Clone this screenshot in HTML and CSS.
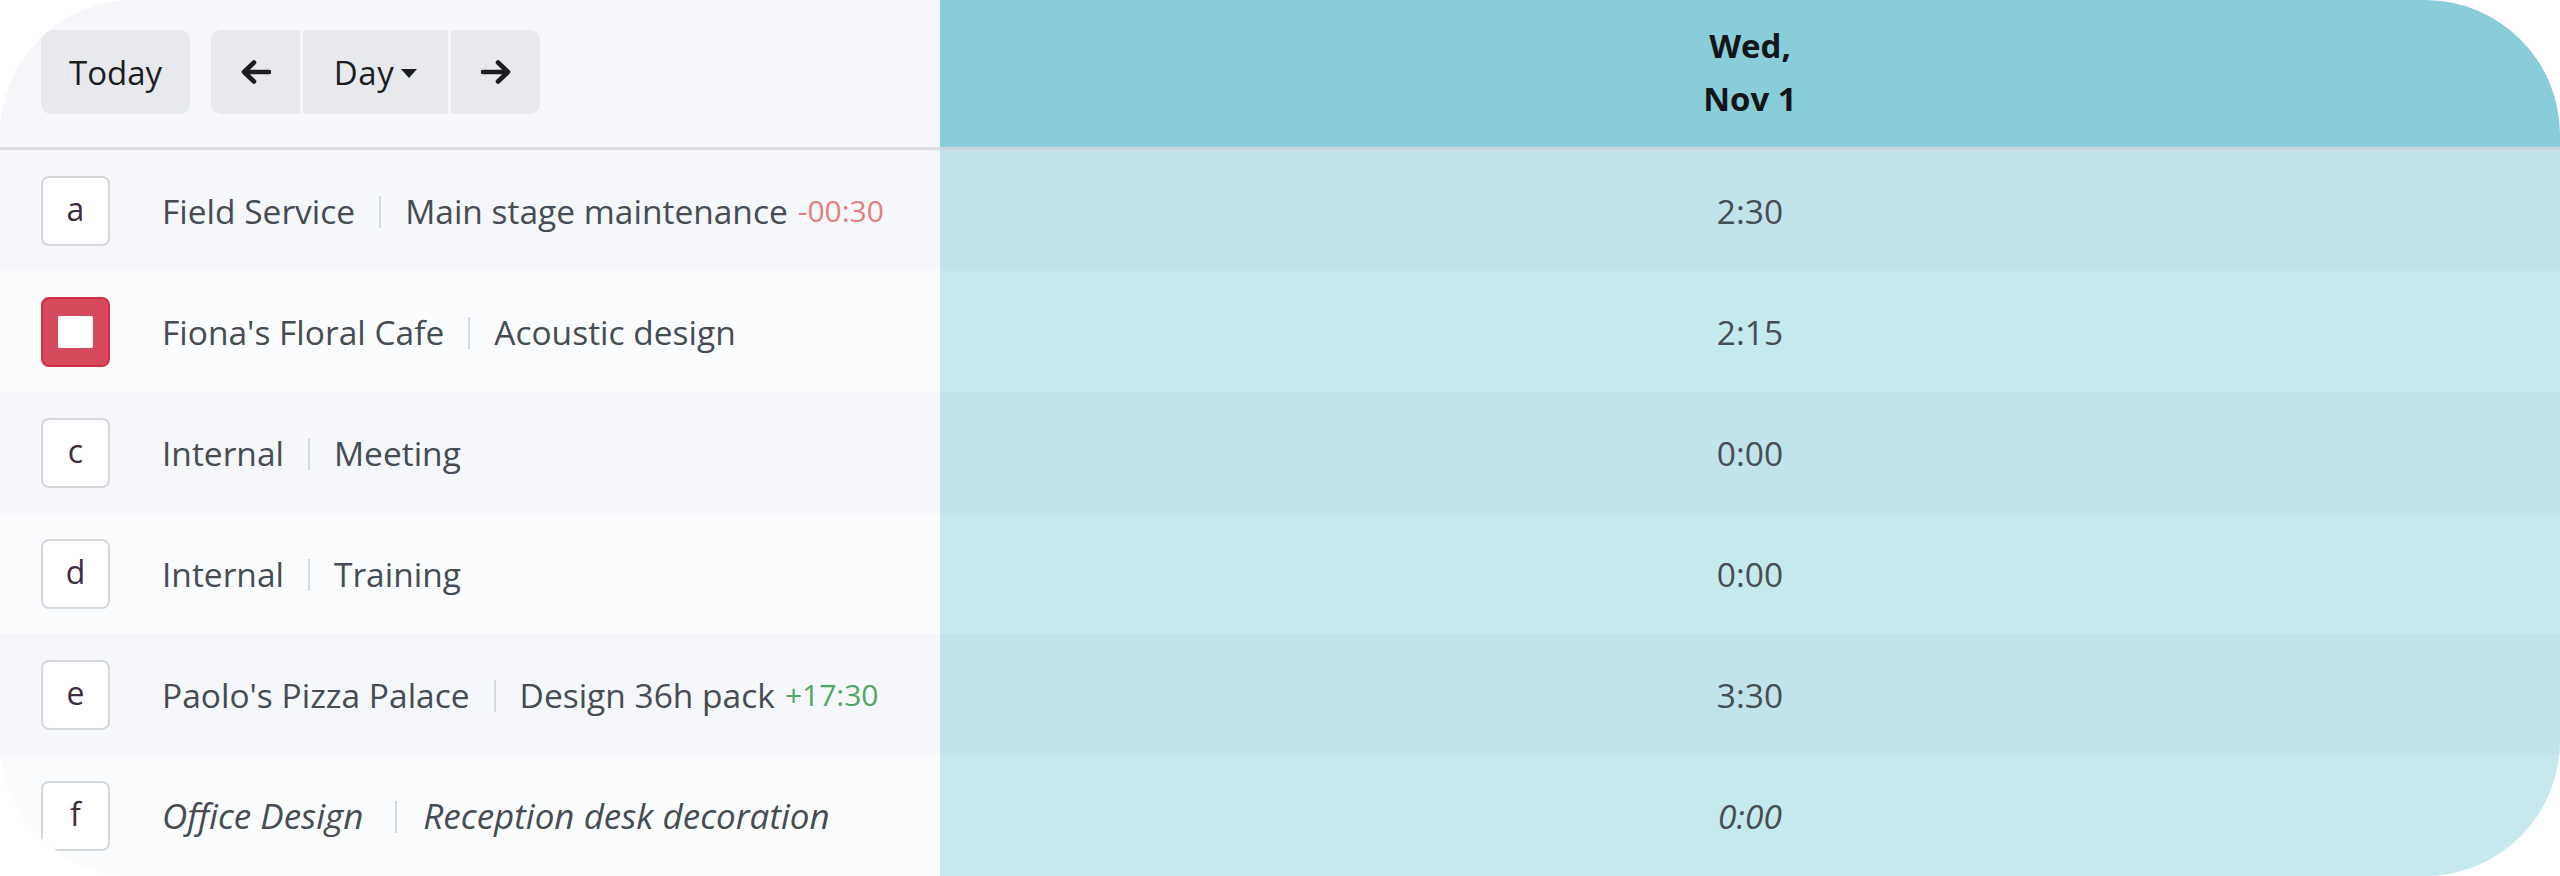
FILE: index.html
```html
<!DOCTYPE html>
<html lang="en">
<head>
<meta charset="utf-8">
<title>Timesheet grid</title>
<link rel="stylesheet" href="styles.css">
</head>
<body>
<div class="card">
  <div class="grid">
    <div class="cell head-left">
      <button class="btn btn-today">Today</button>
      <div class="btn-group">
        <button class="btn btn-arrow" aria-label="Previous">
          <svg width="34" height="28" viewBox="0 0 34 28"><path d="M30 14H6M15 4.5L5 14l10 9.5" fill="none" stroke="#1b1d21" stroke-width="4.6" stroke-linecap="round" stroke-linejoin="round"/></svg>
        </button>
        <button class="btn btn-day"><span class="day-label">Day</span><span class="caret"></span></button>
        <button class="btn btn-arrow" aria-label="Next">
          <svg width="34" height="28" viewBox="0 0 34 28"><path d="M4 14h24M19 4.5L29 14l-10 9.5" fill="none" stroke="#1b1d21" stroke-width="4.6" stroke-linecap="round" stroke-linejoin="round"/></svg>
        </button>
      </div>
    </div>
    <div class="cell head-right"><span class="date">Wed,<br>Nov 1</span></div>

    <div class="cell lab odd"><span class="box">a</span><span class="t">Field Service</span><span class="sep"></span><span class="t">Main stage maintenance</span><span class="delta neg">-00:30</span></div>
    <div class="cell val odd">2:30</div>

    <div class="cell lab even"><span class="box box-red"><span class="inner"></span></span><span class="t">Fiona's Floral Cafe</span><span class="sep"></span><span class="t">Acoustic design</span></div>
    <div class="cell val even">2:15</div>

    <div class="cell lab odd"><span class="box">c</span><span class="t">Internal</span><span class="sep"></span><span class="t">Meeting</span></div>
    <div class="cell val odd">0:00</div>

    <div class="cell lab even"><span class="box">d</span><span class="t">Internal</span><span class="sep"></span><span class="t">Training</span></div>
    <div class="cell val even">0:00</div>

    <div class="cell lab odd"><span class="box">e</span><span class="t">Paolo's Pizza Palace</span><span class="sep"></span><span class="t">Design 36h pack</span><span class="delta pos">+17:30</span></div>
    <div class="cell val odd">3:30</div>

    <div class="cell lab even ital"><span class="box">f</span><span class="t">Office Design</span><span class="sep sep-wide"></span><span class="t">Reception desk decoration</span></div>
    <div class="cell val even ital">0:00</div>
  </div>
</div>
</body>
</html>
```

FILE: styles.css
```css
html, body {
  margin: 0;
  padding: 0;
  background: #ffffff;
}

body {
  font-family: "Open Sans", "Noto Sans", "Liberation Sans", sans-serif;
  font-size: 33.5px;
  color: #464c53;
}

.card {
  width: 2560px;
  height: 876px;
  border-radius: 135px;
  overflow: hidden;
  background: #f5f7fa;
}

.grid {
  display: grid;
  grid-template-columns: 940px 1fr;
  grid-template-rows: 150px repeat(6, 121px);
  height: 100%;
}

.cell {
  display: flex;
  align-items: center;
  box-sizing: border-box;
  min-width: 0;
}

.head-left {
  background: #f5f7fa;
  border-bottom: 3px solid #dcdde4;
  padding-left: 41px;
  padding-bottom: 3px;
  gap: 21px;
}

.head-right {
  background: #88cdd8;
  border-bottom: 3px solid #c9d6da;
  justify-content: center;
}

.date {
  font-weight: 700;
  color: #131518;
  text-align: center;
  line-height: 53px;
  font-size: 33px;
  padding-bottom: 3px;
}

.btn {
  font-family: inherit;
  font-size: 33px;
  color: #1b1d21;
  background: #e7e9ed;
  border: none;
  height: 84px;
  border-radius: 10px;
  display: flex;
  align-items: center;
  justify-content: center;
  padding: 0;
  margin: 0;
}

.btn-today {
  width: 149px;
}

.btn-group {
  display: flex;
  gap: 3px;
}

.btn-group .btn {
  border-radius: 2px;
}

.btn-group .btn:first-child {
  border-radius: 10px 2px 2px 10px;
}

.btn-group .btn:last-child {
  border-radius: 2px 10px 10px 2px;
}

.btn-arrow {
  width: 89px;
}

.btn-day {
  width: 145px;
  gap: 7px;
}

.day-label {
  letter-spacing: 0.6px;
}

.caret {
  width: 0;
  height: 0;
  border-top: 9px solid #1b1d21;
  border-left: 8px solid transparent;
  border-right: 8px solid transparent;
  margin-top: 2px;
}

.lab {
  padding-left: 41px;
  white-space: nowrap;
}

.lab.odd { background: #f5f7fa; }
.lab.even { background: #fbfcfd; }

.val {
  justify-content: center;
  color: #474d54;
}

.val.odd { background: #c1e3e9; }
.val.even { background: #c6e9ed; }

.ital { font-style: italic; }

.lab.ital .t { font-size: 35px; }

.box {
  width: 69px;
  height: 70px;
  box-sizing: border-box;
  border: 2px solid #d4d7dc;
  border-radius: 8px;
  background: #ffffff;
  display: flex;
  align-items: center;
  justify-content: center;
  margin-right: 52px;
  color: #3f2b42;
  font-style: normal;
  font-size: 32px;
  padding-bottom: 4px;
  flex: none;
}

.box-red {
  background: #d64a5d;
  border: 2px solid #cf2f47;
  padding: 0;
}

.inner {
  width: 35px;
  height: 32px;
  background: #ffffff;
  border-radius: 2px;
}

.sep {
  width: 2px;
  height: 32px;
  background: #d5d8dc;
  margin: 2px 24px 0;
  flex: none;
}

.sep-wide {
  margin: 2px 26px 0 32px;
}

.delta {
  font-size: 30px;
  margin-left: 10px;
}

.neg { color: #e07f80; }
.pos { color: #4fa566; }
```
